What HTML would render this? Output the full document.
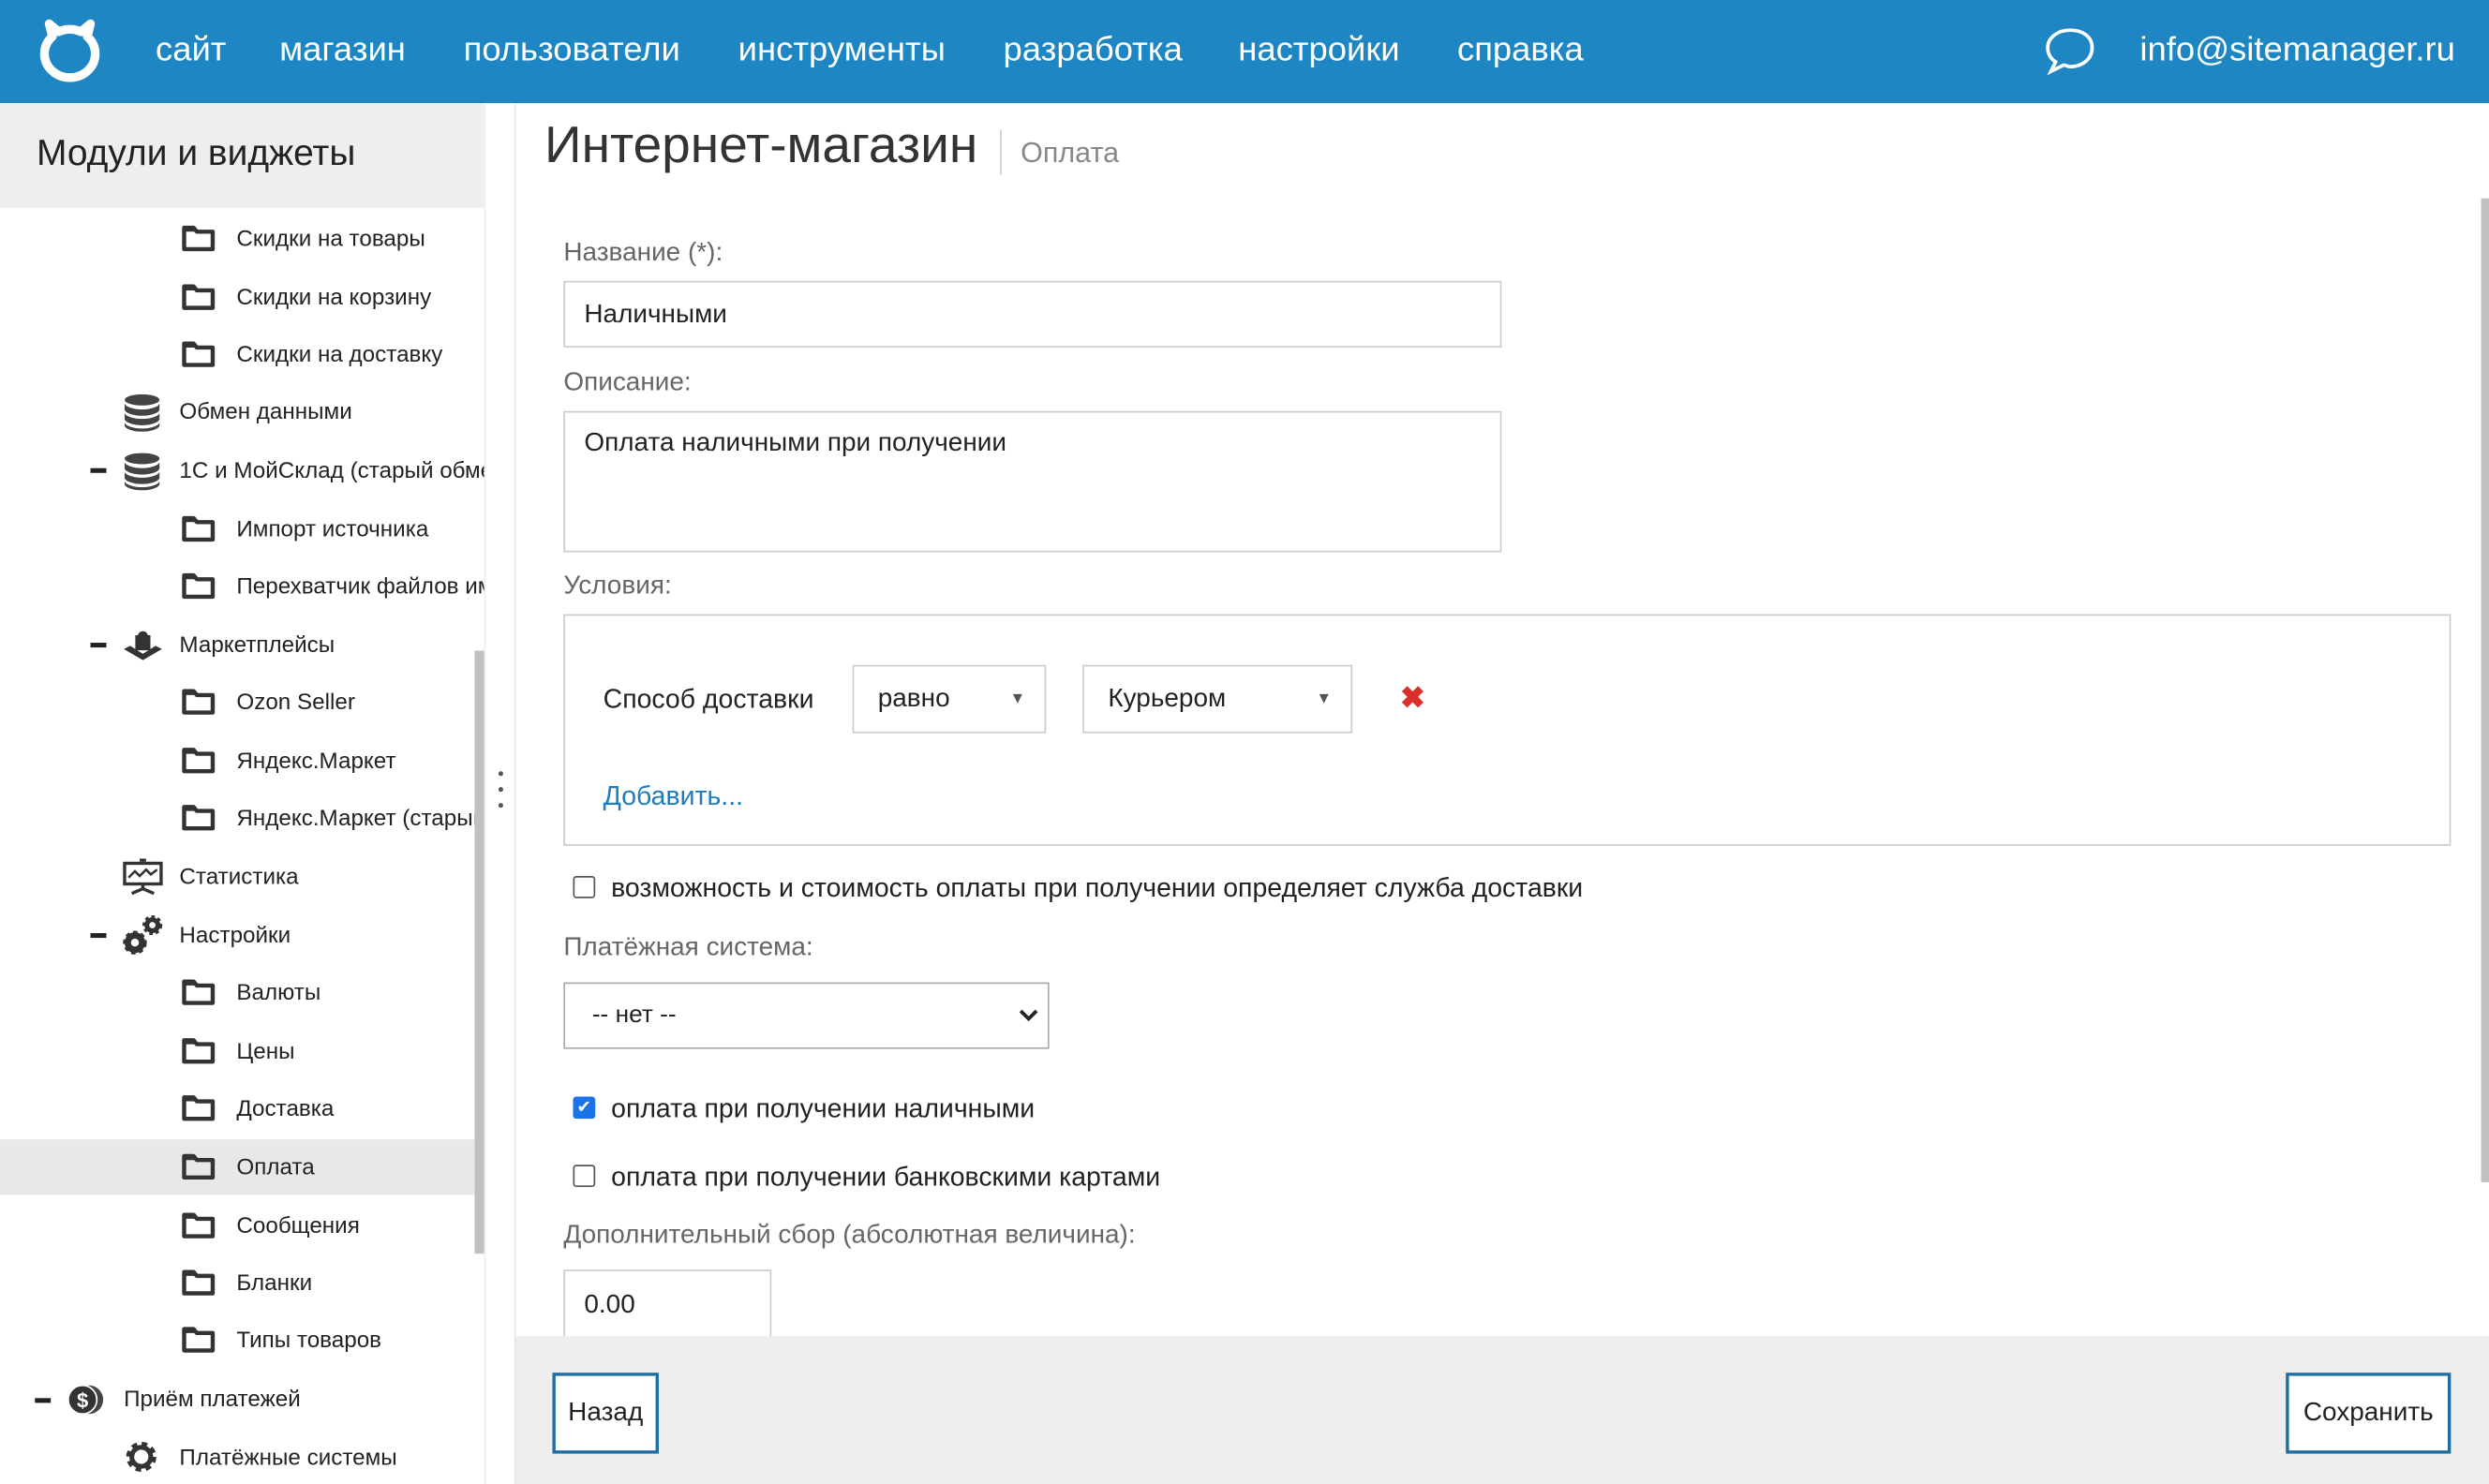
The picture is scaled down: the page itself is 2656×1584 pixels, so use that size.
<!DOCTYPE html>
<html><head><meta charset="utf-8"><style>
html,body{margin:0;padding:0;width:2656px;height:1584px;overflow:hidden;background:#fff}
#w{position:absolute;left:0;top:0;width:1568px;height:935px;transform:scale(1.69388);transform-origin:0 0;font-family:"Liberation Sans","Noto Sans CJK SC",sans-serif;color:#222}
.hdr{position:absolute;left:0;top:0;width:1568px;height:65px;background:#1e87c3;color:#fff}
.hdr .n{position:absolute;top:19px;font-size:21.5px}
.side{position:absolute;left:0;top:65px;width:305px;height:870px;overflow:hidden}
.stitle{height:66px;background:#eee;font-size:23px;padding-left:23px;line-height:62px;color:#222}
.it{position:absolute;font-size:14.3px;white-space:nowrap}
.fold{position:absolute;width:22px;height:18px}
.minus{position:absolute;width:10px;height:2.5px;background:#222}
.lbl{position:absolute;font-size:16.5px;color:#666}
.inp{position:absolute;border:1px solid #ccc;box-sizing:border-box;font-size:16.5px;color:#222;padding-left:12px}
.cb{position:absolute;width:14px;height:14px;border:1.5px solid #555;border-radius:2px;box-sizing:border-box}
.t{position:absolute;font-size:16.8px;white-space:nowrap}
</style></head><body><div id="w">
<svg width="0" height="0" style="position:absolute"><defs><symbol id="f" viewBox="0 0 22 18"><path d="M2 2.5h6l2 2.5h10v11H2z" fill="none" stroke="#333" stroke-width="2.6" stroke-linejoin="round"/><path d="M2 2h6l2 3H2z" fill="#333"/></symbol></defs></svg>
<div class="hdr">
<svg style="position:absolute;left:24px;top:12px" width="40" height="40" viewBox="0 0 40 40"><path d="M7 3 L9 11 A16 15 0 1 0 31 11 L33 3 L27 8 A16 15 0 0 0 13 8 Z" fill="none" stroke="#fff" stroke-width="5.5" stroke-linejoin="round"/></svg>
<span class="n" style="left:98px">сайт</span><span class="n" style="left:176px">магазин</span><span class="n" style="left:292px">пользователи</span><span class="n" style="left:465px">инструменты</span><span class="n" style="left:632px">разработка</span><span class="n" style="left:780px">настройки</span><span class="n" style="left:918px">справка</span>
<svg style="position:absolute;left:1287px;top:16px" width="34" height="32" viewBox="0 0 34 32"><path d="M17 3C9 3 3 8 3 14c0 4 2 7 5 9l-3 6 8-4c1 0 3 1 4 1 8 0 14-5 14-12S25 3 17 3z" fill="none" stroke="#fff" stroke-width="2.2"/></svg>
<span class="n" style="left:1348px">info@sitemanager.ru</span>
</div>
<div class="side"><div class="stitle">Модули и виджеты</div></div>
<div style="position:absolute;left:0;top:65px;width:305px;height:870px;font-size:14px;overflow:hidden">
<svg class="fold" style="left:114px;top:76px"><use href="#f"/></svg><span class="it" style="left:149px;top:78px">Скидки на товары</span>
<svg class="fold" style="left:114px;top:113px"><use href="#f"/></svg><span class="it" style="left:149px;top:115px">Скидки на корзину</span>
<svg class="fold" style="left:114px;top:149px"><use href="#f"/></svg><span class="it" style="left:149px;top:151px">Скидки на доставку</span>
<svg style="position:absolute;left:78px;top:183px" width="23" height="24" viewBox="0 0 23 24"><g fill="#444"><ellipse cx="11.5" cy="4" rx="11" ry="3.5"/><path d="M.5 6c0 2 5 4 11 4s11-2 11-4v4c0 2-5 4-11 4S.5 12 .5 10z"/><path d="M.5 12c0 2 5 4 11 4s11-2 11-4v4c0 2-5 4-11 4S.5 18 .5 16z"/><path d="M.5 18c0 2 5 4 11 4s11-2 11-4v2c0 2-5 4-11 4S.5 22 .5 20z"/></g></svg><span class="it" style="left:113px;top:187px">Обмен данными</span>
<div class="minus" style="left:57px;top:230px"></div>
<svg style="position:absolute;left:78px;top:220px" width="23" height="24" viewBox="0 0 23 24"><g fill="#444"><ellipse cx="11.5" cy="4" rx="11" ry="3.5"/><path d="M.5 6c0 2 5 4 11 4s11-2 11-4v4c0 2-5 4-11 4S.5 12 .5 10z"/><path d="M.5 12c0 2 5 4 11 4s11-2 11-4v4c0 2-5 4-11 4S.5 18 .5 16z"/><path d="M.5 18c0 2 5 4 11 4s11-2 11-4v2c0 2-5 4-11 4S.5 22 .5 20z"/></g></svg><span class="it" style="left:113px;top:224px">1С и МойСклад (старый обмен)</span>
<svg class="fold" style="left:114px;top:259px"><use href="#f"/></svg><span class="it" style="left:149px;top:261px">Импорт источника</span>
<svg class="fold" style="left:114px;top:295px"><use href="#f"/></svg><span class="it" style="left:149px;top:297px">Перехватчик файлов импорта</span>
<div class="minus" style="left:57px;top:340px"></div>
<svg style="position:absolute;left:77px;top:329px" width="26" height="24" viewBox="0 0 26 24"><path d="M9 7h8v8H9z M10.5 7a2.5 2.5 0 0 1 5 0" fill="#333" stroke="#333" stroke-width="1.5"/><path d="M1 15l12 7 12-7-4-2-8 5-8-5z" fill="#333"/></svg><span class="it" style="left:113px;top:334px">Маркетплейсы</span>
<svg class="fold" style="left:114px;top:368px"><use href="#f"/></svg><span class="it" style="left:149px;top:370px">Ozon Seller</span>
<svg class="fold" style="left:114px;top:405px"><use href="#f"/></svg><span class="it" style="left:149px;top:407px">Яндекс.Маркет</span>
<svg class="fold" style="left:114px;top:441px"><use href="#f"/></svg><span class="it" style="left:149px;top:443px">Яндекс.Маркет (старый)</span>
<svg style="position:absolute;left:77px;top:476px" width="26" height="24" viewBox="0 0 26 24"><rect x="1.5" y="3" width="23" height="13" fill="none" stroke="#333" stroke-width="2"/><path d="M4 12l4-4 3 3 4-4 3 3 4-3" fill="none" stroke="#333" stroke-width="1.5"/><path d="M13 16v4M6 22l7-3 7 3M11 1h4" stroke="#333" stroke-width="2" fill="none"/></svg><span class="it" style="left:113px;top:480px">Статистика</span>
<div class="minus" style="left:57px;top:523px"></div>
<svg style="position:absolute;left:77px;top:511px" width="26" height="26" viewBox="0 0 26 26"><circle cx="8" cy="18" r="4.5" fill="none" stroke="#333" stroke-width="4"/><circle cx="8" cy="18" r="6" fill="none" stroke="#333" stroke-width="3" stroke-dasharray="2.5 2"/><circle cx="19" cy="7" r="3.5" fill="none" stroke="#333" stroke-width="3"/><circle cx="19" cy="7" r="5" fill="none" stroke="#333" stroke-width="2.5" stroke-dasharray="2 1.8"/></svg><span class="it" style="left:113px;top:517px">Настройки</span>
<svg class="fold" style="left:114px;top:551px"><use href="#f"/></svg><span class="it" style="left:149px;top:553px">Валюты</span>
<svg class="fold" style="left:114px;top:588px"><use href="#f"/></svg><span class="it" style="left:149px;top:590px">Цены</span>
<svg class="fold" style="left:114px;top:624px"><use href="#f"/></svg><span class="it" style="left:149px;top:626px">Доставка</span>
<div style="position:absolute;left:0;top:653px;width:300px;height:35px;background:#e8e8e8"></div>
<svg class="fold" style="left:114px;top:661px"><use href="#f"/></svg><span class="it" style="left:149px;top:663px">Оплата</span>
<svg class="fold" style="left:114px;top:698px"><use href="#f"/></svg><span class="it" style="left:149px;top:700px">Сообщения</span>
<svg class="fold" style="left:114px;top:734px"><use href="#f"/></svg><span class="it" style="left:149px;top:736px">Бланки</span>
<svg class="fold" style="left:114px;top:770px"><use href="#f"/></svg><span class="it" style="left:149px;top:772px">Типы товаров</span>
<div class="minus" style="left:22px;top:816px"></div>
<svg style="position:absolute;left:42px;top:806px" width="24" height="22" viewBox="0 0 24 22"><circle cx="14" cy="11" r="9" fill="#444"/><circle cx="10" cy="11" r="9" fill="#333" stroke="#fff" stroke-width="1"/><text x="10" y="16" font-size="13" font-weight="bold" fill="#fff" text-anchor="middle" font-family="Liberation Sans">$</text></svg><span class="it" style="left:78px;top:809px">Приём платежей</span>
<svg style="position:absolute;left:78px;top:842px" width="22" height="22" viewBox="0 0 22 22"><circle cx="11" cy="11" r="7" fill="none" stroke="#333" stroke-width="5" stroke-dasharray="3 2.5"/><circle cx="11" cy="11" r="6" fill="none" stroke="#333" stroke-width="3"/></svg><span class="it" style="left:113px;top:846px">Платёжные системы</span>
<div style="position:absolute;left:299px;top:345px;width:6px;height:380px;background:#c1c1c1"></div>
</div>
<div style="position:absolute;left:305px;top:65px;width:1px;height:870px;background:#eee"></div>
<div style="position:absolute;left:324px;top:65px;width:1px;height:870px;background:#e6e6e6"></div>
<div style="position:absolute;left:314px;top:486px;width:3px;height:3px;border-radius:2px;background:#555;box-shadow:0 10px 0 #555,0 20px 0 #555"></div>
<div style="position:absolute;left:343px;top:73px;font-size:32.5px;color:#333">Интернет-магазин</div>
<div style="position:absolute;left:630px;top:82px;width:1px;height:28px;background:#ccc"></div>
<div style="position:absolute;left:643px;top:86px;font-size:18px;color:#888">Оплата</div>
<div class="lbl" style="left:355px;top:150px">Название (*):</div>
<div class="inp" style="left:355px;top:177px;width:591px;height:42px;line-height:40px">Наличными</div>
<div class="lbl" style="left:355px;top:232px">Описание:</div>
<div class="inp" style="left:355px;top:259px;width:591px;height:89px;padding-top:10px">Оплата наличными при получении</div>
<div class="lbl" style="left:355px;top:360px">Условия:</div>
<div style="position:absolute;left:355px;top:387px;width:1189px;height:146px;border:1px solid #ccc;box-sizing:border-box"></div>
<span class="t" style="left:380px;top:431px">Способ доставки</span>
<div class="inp" style="left:537px;top:419px;width:122px;height:43px;line-height:41px;padding-left:15px">равно<span style="position:absolute;right:12px;font-size:10px;color:#555">▼</span></div>
<div class="inp" style="left:682px;top:419px;width:170px;height:43px;line-height:41px;padding-left:15px">Курьером<span style="position:absolute;right:12px;font-size:10px;color:#555">▼</span></div>
<span style="position:absolute;left:882px;top:429px;font-size:19px;color:#d9302a;font-weight:bold">✖</span>
<span class="t" style="left:380px;top:492px;color:#1e7dc0">Добавить...</span>
<div class="cb" style="left:361px;top:552px"></div>
<span class="t" style="left:385px;top:550px">возможность и стоимость оплаты при получении определяет служба доставки</span>
<div class="lbl" style="left:355px;top:588px">Платёжная система:</div>
<div class="inp" style="left:355px;top:619px;width:306px;height:42px;line-height:40px;padding-left:17px;border-color:#aaa;font-size:15.5px">-- нет --<svg style="position:absolute;right:6px;top:15px" width="12" height="10" viewBox="0 0 12 10"><path d="M1 2l5 5 5-5" fill="none" stroke="#222" stroke-width="2.2"/></svg></div>
<div style="position:absolute;left:361px;top:691px;width:14px;height:14px;background:#1a73e8;border-radius:2px;color:#fff;font-size:11px;line-height:14px;text-align:center">✔</div>
<span class="t" style="left:385px;top:689px">оплата при получении наличными</span>
<div class="cb" style="left:361px;top:734px"></div>
<span class="t" style="left:385px;top:732px">оплата при получении банковскими картами</span>
<div class="lbl" style="left:355px;top:769px">Дополнительный сбор (абсолютная величина):</div>
<div class="inp" style="left:355px;top:800px;width:131px;height:45px;line-height:42px">0.00</div>
<div style="position:absolute;left:1563px;top:125px;width:5px;height:620px;background:#c1c1c1"></div>
<div style="position:absolute;left:325px;top:842px;width:1243px;height:93px;background:#eee"></div>
<div style="position:absolute;left:348px;top:865px;width:67px;height:51px;border:2px solid #1e6fa0;box-sizing:border-box;background:#fff;font-size:16.5px;line-height:47px;text-align:center">Назад</div>
<div style="position:absolute;left:1440px;top:865px;width:104px;height:51px;border:2px solid #1e6fa0;box-sizing:border-box;background:#fff;font-size:16.5px;line-height:47px;text-align:center">Сохранить</div>
</div></body></html>
